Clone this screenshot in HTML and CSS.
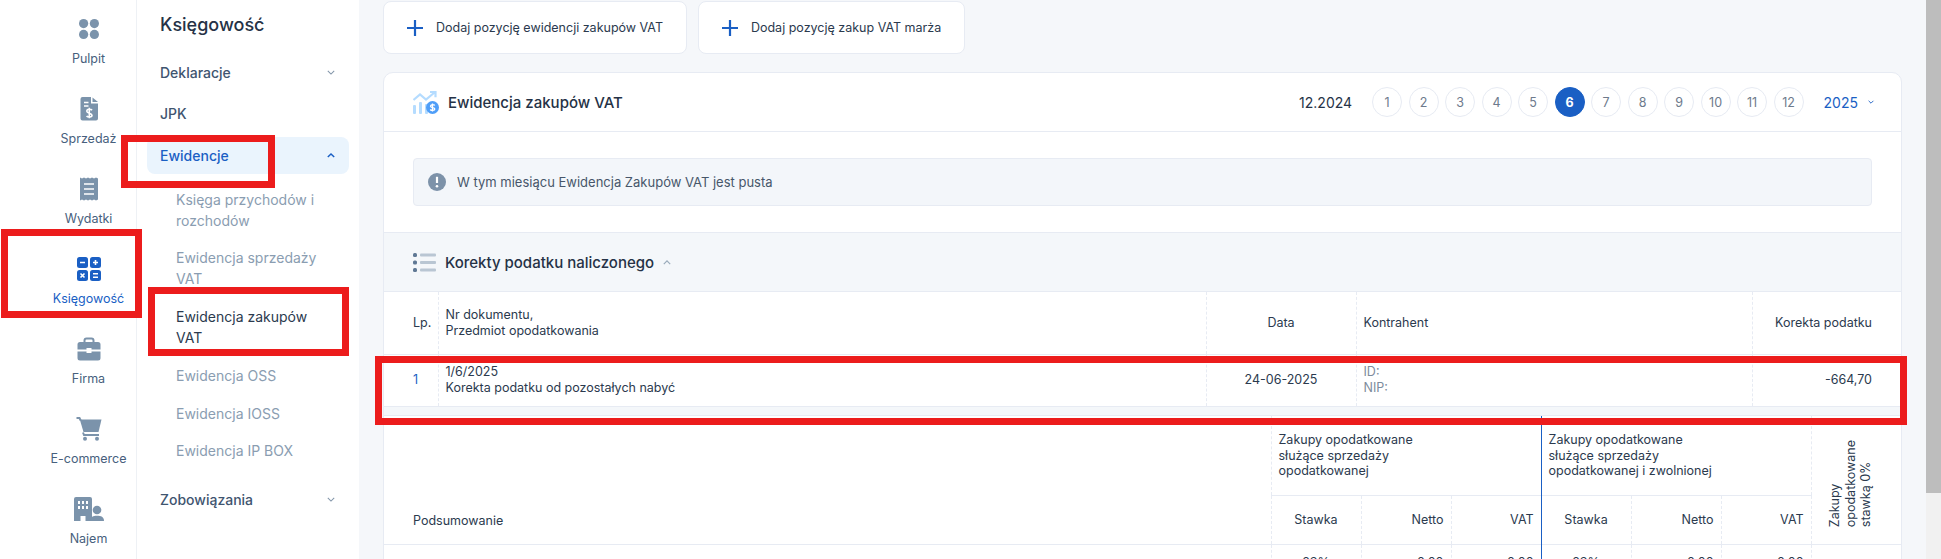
FILE: index.html
```html
<!DOCTYPE html>
<html lang="pl">
<head>
<meta charset="utf-8">
<title>Ewidencja zakupów VAT</title>
<link rel="stylesheet" href="styles.css">
</head>
<body>
<nav class="rail">
  <a class="rail-item"><svg class="rail-icon" viewBox="0 0 24 24"><circle cx="6.6" cy="6.6" r="4.6"/><circle cx="17.4" cy="6.6" r="4.6"/><circle cx="6.6" cy="17.4" r="4.6"/><circle cx="17.4" cy="17.4" r="4.6"/></svg><span>Pulpit</span></a>
  <a class="rail-item"><svg class="rail-icon" viewBox="0 0 24 24"><path d="M5.5 0H14V6.5H21V21.5A2 2 0 0 1 19 23.5H5.5A2 2 0 0 1 3.500 21.500V2A2 2 0 0 1 5.500 0Z"/><path d="M15.500 0.500L21 5H15.500Z"/><path class="cut" d="M7 5.500H11.500M7 9H11.500M15 13.200C14 11.800 9.800 11.900 9.800 14.200C9.800 16.600 15 15.700 15 18.200C15 20.500 10.800 20.500 9.600 18.900M12.300 10.800V21.300"/></svg><span>Sprzedaż</span></a>
  <a class="rail-item"><svg class="rail-icon" viewBox="0 0 24 24"><path d="M3 0.500L5 1.500L7 0.500L9 1.500L11 0.500L13 1.500L15 0.500L17 1.500L19 0.500L21 1.500V22.500L19 23.500L17 22.500L15 23.500L13 22.500L11 23.500L9 22.500L7 23.500L5 22.500L3 23.500Z"/><path class="cut" d="M7 7H17M7 12H17M7 17H17"/></svg><span>Wydatki</span></a>
  <a class="rail-item active"><svg class="rail-icon" viewBox="0 0 24 24"><rect x="0" y="0" width="11" height="11" rx="2.500"/><rect x="13" y="0" width="11" height="11" rx="2.500"/><rect x="0" y="13" width="11" height="11" rx="2.500"/><rect x="13" y="13" width="11" height="11" rx="2.500"/><path class="cut" d="M3 5.500H8M16 5.500H21M18.500 3V8M3.500 16.500L7.500 20.500M7.500 16.500L3.500 20.500M16 16.800H21M16 20.200H21"/></svg><span>Księgowość</span></a>
  <a class="rail-item"><svg class="rail-icon" viewBox="0 0 24 24"><path d="M7.500 5V3.500A2 2 0 0 1 9.500 1.500H14.500A2 2 0 0 1 16.500 3.500V5" class="outline"/><path d="M3 5H21A2.500 2.500 0 0 1 23.500 7.500V12.500H14.500V11H9.500V12.500H0.500V7.500A2.500 2.500 0 0 1 3 5Z"/><path d="M0.500 14.500H9.500V16H14.500V14.500H23.500V21A2.500 2.500 0 0 1 21 23.500H3A2.500 2.500 0 0 1 0.500 21Z"/></svg><span>Firma</span></a>
  <a class="rail-item"><svg class="rail-icon cart" viewBox="0 0 26 24"><path d="M0.500 1H3.500L4.700 3.500" class="outline"/><path d="M3.800 2.500H25.500L22.500 15H7.500Z"/><path d="M7 15.500L8 18H23" class="outline"/><circle cx="9" cy="21.800" r="2"/><circle cx="21" cy="21.800" r="2"/></svg><span>E-commerce</span></a>
  <a class="rail-item"><svg class="rail-icon najem" viewBox="0 0 30 24"><path d="M2 0H16A2 2 0 0 1 18 2V24H11.500V19H6.500V24H0V2A2 2 0 0 1 2 0Z"/><path class="cut dots" d="M4 5.500H6M8 5.500H10M12 5.500H14M4 10.500H6M8 10.500H10M12 10.500H14"/><circle cx="23" cy="13" r="4.300"/><path d="M16.500 24C16.500 20 19 18.800 23 18.800S30 20 30 24Z"/></svg><span>Najem</span></a>
</nav>

<aside class="subnav">
  <h2 class="subnav-title">Księgowość</h2>
  <ul class="subnav-list">
    <li class="subnav-item"><span>Deklaracje</span><svg class="chev" viewBox="0 0 10 6"><path d="M1 1L5 5L9 1"/></svg></li>
    <li class="subnav-item"><span>JPK</span></li>
    <li class="subnav-item open"><span>Ewidencje</span><svg class="chev" viewBox="0 0 10 6"><path d="M1 5L5 1L9 5"/></svg></li>
  </ul>
  <ul class="sublist">
    <li>Księga przychodów i rozchodów</li>
    <li>Ewidencja sprzedaży VAT</li>
    <li class="current">Ewidencja zakupów VAT</li>
    <li>Ewidencja OSS</li>
    <li>Ewidencja IOSS</li>
    <li>Ewidencja IP BOX</li>
  </ul>
  <ul class="subnav-list last">
    <li class="subnav-item"><span>Zobowiązania</span><svg class="chev" viewBox="0 0 10 6"><path d="M1 1L5 5L9 1"/></svg></li>
  </ul>
</aside>

<main class="main">
  <div class="actions">
    <button class="action"><svg class="plus" viewBox="0 0 16 16"><path d="M8 0V16M0 8H16"/></svg>Dodaj pozycję ewidencji zakupów VAT</button>
    <button class="action"><svg class="plus" viewBox="0 0 16 16"><path d="M8 0V16M0 8H16"/></svg>Dodaj pozycję zakup VAT marża</button>
  </div>

  <section class="card">
    <header class="card-head">
      <svg class="head-icon" viewBox="0 0 26 23"><g fill="#b5dcff"><rect x="0" y="14" width="3" height="9" rx="1"/><rect x="6" y="11" width="3" height="12" rx="1"/><rect x="12" y="13" width="3" height="10" rx="1"/></g><path d="M0.500 9L7 3.500L13 8.500L21.500 1.500M17 0.800H22.500V6.300" fill="none" stroke="#b5dcff" stroke-width="2.200"/><circle cx="19.500" cy="16.500" r="6.500" fill="#4f9ef8"/><path d="M21.800 14.500C21 13.300 17.500 13.400 17.500 15.300C17.500 17.300 21.800 16 21.800 18C21.800 19.800 18.200 19.800 17.200 18.500M19.500 12.500V20.500" fill="none" stroke="#fff" stroke-width="1.300"/></svg>
      <h1 class="card-title">Ewidencja zakupów VAT</h1>
      <span class="period">12.2024</span>
      <div class="months">
        <a class="month">1</a><a class="month">2</a><a class="month">3</a><a class="month">4</a><a class="month">5</a><a class="month on">6</a><a class="month">7</a><a class="month">8</a><a class="month">9</a><a class="month">10</a><a class="month">11</a><a class="month">12</a>
      </div>
      <span class="year">2025<svg class="year-chev" viewBox="0 0 10 6"><path d="M1 1L5 5L9 1"/></svg></span>
    </header>

    <div class="notice-wrap">
      <div class="notice">
        <svg class="notice-icon" viewBox="0 0 18 18"><circle cx="9" cy="9" r="9" fill="#7d92a9"/><path d="M9 3.800V10" stroke="#fff" stroke-width="2.200"/><circle cx="9" cy="13.200" r="1.300" fill="#fff"/></svg>
        W tym miesiącu Ewidencja Zakupów VAT jest pusta
      </div>
    </div>

    <div class="section-head">
      <svg class="list-icon" viewBox="0 0 23 19"><g fill="#5f7894"><rect x="0" y="0" width="4" height="4" rx="1.500"/><rect x="0" y="7.500" width="4" height="4" rx="1.500"/><rect x="0" y="15" width="4" height="4" rx="1.500"/></g><g fill="#b9c6d3"><rect x="7" y="0.500" width="16" height="3" rx="1"/><rect x="7" y="8" width="16" height="3" rx="1"/><rect x="7" y="15.500" width="16" height="3" rx="1"/></g></svg>
      <span class="section-title">Korekty podatku naliczonego</span>
      <svg class="section-chev" viewBox="0 0 10 6"><path d="M1 5L5 1L9 5"/></svg>
    </div>

    <table class="tbl corrections">
      <colgroup><col class="c-lp"><col class="c-doc"><col class="c-date"><col class="c-party"><col class="c-tax"></colgroup>
      <thead>
        <tr><th class="first">Lp.</th><th>Nr dokumentu,<br>Przedmiot opodatkowania</th><th class="center">Data</th><th>Kontrahent</th><th class="right last">Korekta podatku</th></tr>
      </thead>
      <tbody>
        <tr><td class="first link">1</td><td>1/6/2025<br>Korekta podatku od pozostałych nabyć</td><td class="center">24-06-2025</td><td class="muted">ID:<br>NIP:</td><td class="right last">-664,70</td></tr>
      </tbody>
    </table>
    <div class="strip"></div>

    <table class="tbl summary">
      <colgroup><col class="s-name"><col class="s-col"><col class="s-col"><col class="s-col"><col class="s-col"><col class="s-col"><col class="s-col"><col class="s-col"></colgroup>
      <thead>
        <tr class="groups">
          <th rowspan="2" class="first bottom">Podsumowanie</th>
          <th colspan="3" class="group sep">Zakupy opodatkowane<br>służące sprzedaży<br>opodatkowanej</th>
          <th colspan="3" class="group">Zakupy opodatkowane<br>służące sprzedaży<br>opodatkowanej i zwolnionej</th>
          <th rowspan="2" class="rot-cell"><div class="rot">Zakupy<br>opodatkowane<br>stawką 0%</div></th>
        </tr>
        <tr class="subs">
          <th class="center">Stawka</th><th class="right">Netto</th><th class="right sep">VAT</th>
          <th class="center">Stawka</th><th class="right">Netto</th><th class="right">VAT</th>
        </tr>
      </thead>
      <tbody>
        <tr class="vals">
          <td class="first"></td>
          <td class="center">23%</td><td class="right">0,00</td><td class="right sep">0,00</td>
          <td class="center">23%</td><td class="right">0,00</td><td class="right">0,00</td>
          <td></td>
        </tr>
      </tbody>
    </table>
  </section>
</main>

<div class="scrollbar"><div class="thumb"></div></div>

<div class="mark mark-nav"></div>
<div class="mark mark-ewid"></div>
<div class="mark mark-sub"></div>
<div class="mark mark-row"></div>
</body>
</html>
```

FILE: styles.css
```css
* { box-sizing: border-box; }
html, body { margin: 0; height: 559px; overflow: hidden; }
body {
  position: relative;
  display: flex;
  width: 1941px;
  background: #f5f7fa;
  font-family: Inter, "Liberation Sans", sans-serif;
  font-size: 12.5px;
  color: #253246;
}
ul { list-style: none; margin: 0; padding: 0; }

/* Icon rail */
.rail {
  flex: 0 0 137px;
  padding-left: 41px;
  background: #fff;
  border-right: 1px solid #eef1f5;
}
.rail-item {
  display: flex;
  flex-direction: column;
  align-items: center;
  height: 80px;
  padding-top: 17px;
  font-size: 12.5px;
  line-height: 16px;
  color: #47607d;
}
.rail-icon {
  width: 24px;
  height: 24px;
  margin-bottom: 10px;
  flex: none;
  fill: #7b93ab;
}
.rail-icon.cart { width: 26px; }
.rail-icon.najem { width: 30px; }
.rail-icon .cut { fill: none; stroke: #fff; stroke-width: 1.6; }
.rail-icon .cut.dots { stroke-width: 3; }
.rail-icon .outline { fill: none; stroke: #7b93ab; stroke-width: 2; }
.rail-item.active { color: #1a5fc4; }
.rail-item.active .rail-icon { fill: #1a5fc4; }

/* Secondary menu */
.subnav {
  flex: 0 0 222px;
  background: #fff;
  padding-top: 12px;
}
.subnav-title {
  margin: 0 0 15.500px 23px;
  font-size: 18px;
  font-weight: 500;
  line-height: 26px;
  color: #253246;
}
.subnav-list { display: flex; flex-direction: column; gap: 4.5px; }
.subnav-list.last { margin-top: 20px; }
.subnav-item {
  display: flex;
  align-items: center;
  justify-content: space-between;
  height: 37px;
  margin: 0 10px;
  padding: 0 14px 0 13px;
  border-radius: 8px;
  font-size: 14px;
  font-weight: 500;
  color: #3f5570;
}
.subnav-item.open { background: #eaf4fd; color: #1a5fc4; }
.chev { width: 8px; height: 5px; fill: none; stroke: #8295a9; stroke-width: 1.300; overflow: visible; }
.open .chev { stroke: #1a5fc4; stroke-width: 1.800; }
.sublist {
  display: flex;
  flex-direction: column;
  gap: 16.800px;
  margin-top: 15px;
  padding: 0 30px 0 39px;
  font-size: 14px;
  line-height: 21px;
  color: #8a9db1;
}
.sublist .current { color: #2b3a4e; }

/* Main */
.main { flex: 1; min-width: 0; padding: 1px 24px 0; }
.actions { display: flex; gap: 11px; }
.action {
  display: flex;
  align-items: center;
  gap: 13px;
  height: 53px;
  padding: 0 23px;
  background: #fff;
  border: 1px solid #e7ebf3;
  border-radius: 8px;
  font: 400 12.5px Inter, "Liberation Sans", sans-serif;
  color: #2b3a4e;
}
.plus { width: 16px; height: 16px; fill: none; stroke: #1a5fc4; stroke-width: 2.200; flex: none; }
.card {
  margin-top: 18px;
  background: #fff;
  border: 1px solid #e7ebf3;
  border-radius: 10px 10px 0 0;
}
.card-head {
  display: flex;
  align-items: center;
  height: 59px;
  padding: 0 27px 0 29px;
  border-bottom: 1px solid #e7ebf3;
}
.head-icon { width: 26px; height: 23px; margin-right: 9px; flex: none; }
.card-title { margin: 0; font-size: 15px; font-weight: 500; color: #253246; }
.period { margin-left: auto; font-size: 14px; }
.months { display: flex; gap: 6.500px; margin-left: 20px; }
.month {
  display: flex;
  align-items: center;
  justify-content: center;
  width: 30px;
  height: 30px;
  border: 1px solid #e7ebf3;
  border-radius: 50%;
  font-size: 12.5px;
  color: #6d7a8c;
}
.month.on { background: #1a5fc4; border-color: #1a5fc4; color: #fff; font-weight: 700; }
.year {
  display: flex;
  align-items: center;
  gap: 10px;
  margin-left: 20px;
  font-size: 14px;
  color: #1a5fc4;
}
.year-chev { width: 6px; height: 4px; fill: none; stroke: #1a5fc4; stroke-width: 1.500; overflow: visible; }
.notice-wrap { height: 100px; padding: 26px 29px 0; }
.notice {
  display: flex;
  align-items: center;
  gap: 11px;
  height: 48px;
  padding: 0 14px;
  background: #f3f6fa;
  border: 1px solid #e7ebf3;
  border-radius: 4px;
  font-size: 13px;
  color: #47566a;
}
.notice-icon { width: 18px; height: 18px; flex: none; }
.section-head {
  display: flex;
  align-items: center;
  height: 60px;
  padding-left: 29px;
  background: #f4f7fa;
  border-top: 1px solid #e7ebf3;
  border-bottom: 1px solid #e7ebf3;
}
.list-icon { width: 23px; height: 19px; margin-right: 9px; flex: none; }
.section-title { font-size: 15px; font-weight: 500; }
.section-chev { width: 8px; height: 5px; margin-left: 9px; fill: none; stroke: #9aabbb; stroke-width: 1.500; overflow: visible; }

/* Tables */
.tbl {
  table-layout: fixed;
  width: 1517px;
  border-collapse: collapse;
  font-size: 12.5px;
  line-height: 16px;
}
.tbl th, .tbl td { padding: 0 7px; text-align: left; font-weight: 400; color: #2b3a4e; }
.tbl .center { text-align: center; }
.tbl .right { text-align: right; }
.tbl .first { padding-left: 29px; }
.tbl .muted { color: #7d8b9c; }
.tbl .link { color: #1a5fc4; }
.c-lp { width: 54px; }
.c-doc { width: 768px; }
.c-date { width: 150px; }
.c-party { width: 396px; }
.c-tax { width: 149px; }
.corrections thead tr { height: 62px; border-bottom: 1px solid #e7ebf3; }
.corrections tbody tr { height: 52px; }
.corrections th + th, .corrections td + td { border-left: 1px dashed #e7ebf3; }
.corrections .last { padding-right: 29px; }
.strip { height: 10px; background: #f4f7fa; border-top: 1px solid #e7ebf3; border-bottom: 1px solid #e7ebf3; }
.s-name { width: 887px; }
.s-col { width: 90px; }
.groups { height: 79px; }
.subs { height: 49px; border-top: 1px solid #e7ebf3; border-bottom: 1px solid #e7ebf3; }
.vals { height: 38px; }
.group { vertical-align: top; padding-top: 16px !important; line-height: 15.500px; }
.summary th:not(.first), .summary td:not(.first) { border-left: 1px dashed #e7ebf3; }
.summary .sep { border-right: 1px solid #1a5fc4; }
.summary .first.bottom { vertical-align: bottom; padding-bottom: 15px; }
.rot-cell { vertical-align: bottom; padding: 0 0 16px 15px !important; border-bottom: 1px solid #e7ebf3; }
.rot {
  writing-mode: vertical-rl;
  transform: rotate(180deg);
  line-height: 15.500px;
  white-space: nowrap;
}

/* Browser scrollbar */
.scrollbar { flex: 0 0 15px; background: #f1f1f1; }
.thumb { height: 493px; background: #bdbdbd; }

/* Red annotation frames drawn over the screenshot */
.mark { position: absolute; border: 7px solid #ec1c1c; pointer-events: none; }
.mark-nav { left: 1px; top: 229px; width: 141px; height: 89px; }
.mark-ewid { left: 121px; top: 135px; width: 154px; height: 53px; }
.mark-sub { left: 148px; top: 287px; width: 201px; height: 69px; }
.mark-row { left: 375px; top: 356px; width: 1532px; height: 69px; }
```
